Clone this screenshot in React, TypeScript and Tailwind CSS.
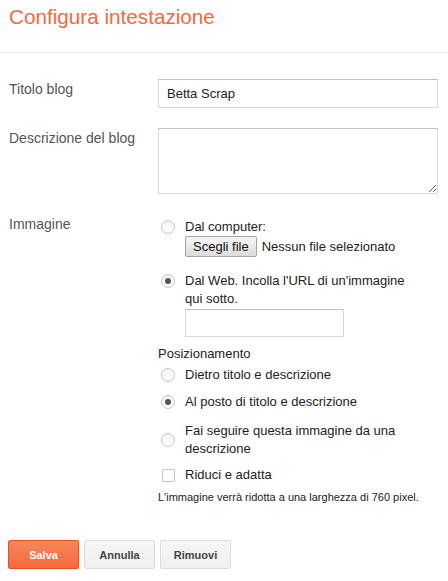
function Radio({ checked }: { checked?: boolean }) {
  return (
    <span className="flex h-[14px] w-[14px] items-center justify-center rounded-full border border-[#c4c4c4] bg-gradient-to-b from-[#f4f4f4] to-white">
      {checked && <span className="h-[6px] w-[6px] rounded-full bg-[#555]" />}
    </span>
  );
}

function Option({
  checked,
  children,
  center,
}: {
  checked?: boolean;
  children: React.ReactNode;
  center?: boolean;
}) {
  return (
    <div className={"flex " + (center ? "items-center" : "items-start")}>
      <div className={"w-[27px] pl-[3px] " + (center ? "" : "pt-[2px]")}>
        <Radio checked={checked} />
      </div>
      <div className="flex-1">{children}</div>
    </div>
  );
}

export default function App() {
  return (
    <div className="min-h-screen bg-white font-['Liberation_Sans',Arial,sans-serif] text-[13px] leading-[18px] text-[#222]">
      {/* header */}
      <div className="h-[53px] border-b border-[#ebebeb] pl-[9px] pt-[3px]">
        <h1 className="text-[20.7px] leading-[28px] text-[#f8683e]">Configura intestazione</h1>
      </div>

      {/* form */}
      <div className="mt-[26px] flex flex-col gap-[20px] pl-[9px]">
        <div className="grid grid-cols-[149px_1fr]">
          <div className="text-[14px] leading-[20px] text-[#555]">Titolo blog</div>
          <input
            defaultValue="Betta Scrap"
            className="h-[29px] w-[280px] border border-[#d9d9d9] border-t-[#c0c0c0] px-[8px] text-[13px] text-[#222] outline-none"
          />
        </div>

        <div className="grid grid-cols-[149px_1fr]">
          <div className="text-[14px] leading-[20px] text-[#555]">Descrizione del blog</div>
          <textarea className="block h-[66px] w-[280px] border border-[#d9d9d9] border-t-[#c0c0c0] px-[8px] py-[4px] text-[13px] outline-none" />
        </div>

        <div className="grid grid-cols-[149px_1fr]">
          <div className="text-[14px] leading-[20px] text-[#555]">Immagine</div>
          <div className="pt-[4px]">
            <Option>
              <div>Dal computer:</div>
              <div className="flex items-center">
                <span className="flex h-[21px] items-center rounded-[2px] border border-[#a3a3a3] bg-gradient-to-b from-[#f6f6f6] to-[#dcdcdc] px-[7px] text-[13px] text-[#111]">
                  Scegli file
                </span>
                <span className="ml-[5px]">Nessun file selezionato</span>
              </div>
            </Option>

            <div className="mt-[15px]">
              <Option checked>
                <div className="w-[230px]">Dal Web. Incolla l'URL di un'immagine qui sotto.</div>
                <input className="mt-[1px] block h-[28px] w-[159px] border border-[#d9d9d9] border-t-[#c0c0c0] px-[6px] outline-none" />
              </Option>
            </div>

            <div className="mt-[8px]">Posizionamento</div>

            <div className="mt-[3px]">
              <Option>Dietro titolo e descrizione</Option>
            </div>
            <div className="mt-[9px]">
              <Option checked>Al posto di titolo e descrizione</Option>
            </div>
            <div className="mt-[11px]">
              <Option center>
                <div className="w-[230px]">Fai seguire questa immagine da una descrizione</div>
              </Option>
            </div>

            <div className="mt-[8px] flex items-center">
              <div className="w-[27px] pl-[4px]">
                <span className="block h-[13px] w-[13px] rounded-[1px] border border-[#c6c6c6] bg-white" />
              </div>
              <span>Riduci e adatta</span>
            </div>

            <div className="mt-[6px] text-[11px] leading-[14px] text-[#222]">
              L'immagine verrà ridotta a una larghezza di 760 pixel.
            </div>
          </div>
        </div>
      </div>

      {/* buttons */}
      <div className="mt-[36px] flex gap-[5px] pl-[8px]">
        <button className="h-[29px] w-[71px] rounded-[2px] border border-[#e8531f] bg-gradient-to-b from-[#f7865c] to-[#f7683c] text-[11px] font-bold text-white">
          Salva
        </button>
        <button className="h-[29px] w-[71px] rounded-[2px] border border-[#dcdcdc] bg-gradient-to-b from-[#f5f5f5] to-[#f0f0f0] text-[11px] font-bold text-[#444]">
          Annulla
        </button>
        <button className="h-[29px] w-[71px] rounded-[2px] border border-[#dcdcdc] bg-gradient-to-b from-[#f5f5f5] to-[#f0f0f0] text-[11px] font-bold text-[#444]">
          Rimuovi
        </button>
      </div>
    </div>
  );
}
